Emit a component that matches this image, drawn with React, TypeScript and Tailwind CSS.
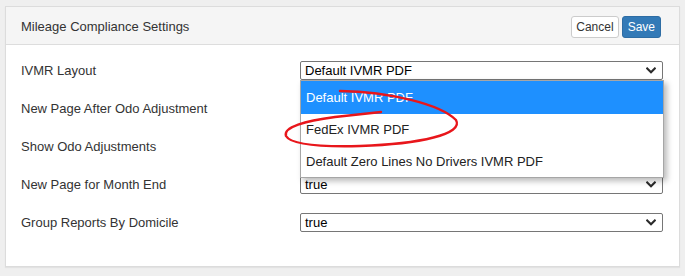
import React from "react";

function Chevron() {
  return (
    <svg width="10" height="7" viewBox="0 0 10 7" className="shrink-0">
      <polyline points="1.2,1.5 5,5.2 8.8,1.5" fill="none" stroke="#2b2b2b" strokeWidth="2.2" strokeLinecap="square" />
    </svg>
  );
}

function FakeSelect({ value }: { value: string }) {
  return (
    <div className="h-[19px] w-full border border-[#767676] rounded-[2px] bg-white flex items-center justify-between pl-[4px] pr-[6px] text-[13px] leading-none text-black">
      <span>{value}</span>
      <Chevron />
    </div>
  );
}

const rows: [string, string][] = [
  ["IVMR Layout", "Default IVMR PDF"],
  ["New Page After Odo Adjustment", ""],
  ["Show Odo Adjustments", ""],
  ["New Page for Month End", "true"],
  ["Group Reports By Domicile", "true"],
];

export default function App() {
  return (
    <div
      className="w-[685px] h-[276px] bg-[#efefef] pt-[6px] pl-[5px] relative overflow-hidden"
      style={{ fontFamily: '"Liberation Sans", Arial, sans-serif' }}
    >
      <div className="w-[675px] h-[261px] bg-white border border-[#dcdcdc] shadow-[0_1px_1px_rgba(0,0,0,0.05)] flex flex-col">
        <div className="h-[38px] bg-[#f5f5f5] border-b border-[#dddddd] flex items-center justify-between pl-[15px] pr-[18px]">
          <span className="text-[13px] text-[#333] pt-[2px]">Mileage Compliance Settings</span>
          <div className="flex gap-[3px] items-center pt-[2px]">
            <div className="h-[22px] px-[4px] flex items-center bg-white border border-[#cccccc] rounded-[3px] text-[12px] text-[#333]">Cancel</div>
            <div className="h-[22px] px-[5px] flex items-center bg-[#337ab7] border border-[#2e6da4] rounded-[3px] text-[12px] text-white">Save</div>
          </div>
        </div>
        <div className="relative pt-[16px] pl-[15px] pr-[16px] flex flex-col gap-[19px]">
          {rows.map(([label, value]) => (
            <div key={label} className="grid grid-cols-[279px_1fr] items-center">
              <span className="text-[13px] text-[#333] leading-none">{label}</span>
              <FakeSelect value={value} />
            </div>
          ))}
        </div>
      </div>

      {/* open dropdown list */}
      <div className="absolute left-[300px] top-[80px] w-[364px] h-[98px] bg-white border border-[#a6a6a6] shadow-[3px_3px_6px_rgba(0,0,0,0.28)] flex flex-col text-[13px]">
        <div className="h-[33px] bg-[#1e90ff] text-white flex items-center pl-[5px]">Default IVMR PDF</div>
        <div className="h-[32px] text-[#222] flex items-center pl-[5px]">FedEx IVMR PDF</div>
        <div className="h-[31px] text-[#222] flex items-center pl-[5px]">Default Zero Lines No Drivers IVMR PDF</div>
      </div>

      {/* red hand-drawn annotation */}
      <svg className="absolute left-0 top-0 pointer-events-none" width="685" height="276" viewBox="0 0 685 276">
        <path
          d="M340,91 C390,92 440,104 456,120 C464,134 420,144 360,146 C320,147 291,145 286,136 C283,127 305,121 335,117 L381,112"
          fill="none"
          stroke="#e8161b"
          strokeWidth="2.4"
          strokeLinecap="round"
        />
      </svg>
    </div>
  );
}
